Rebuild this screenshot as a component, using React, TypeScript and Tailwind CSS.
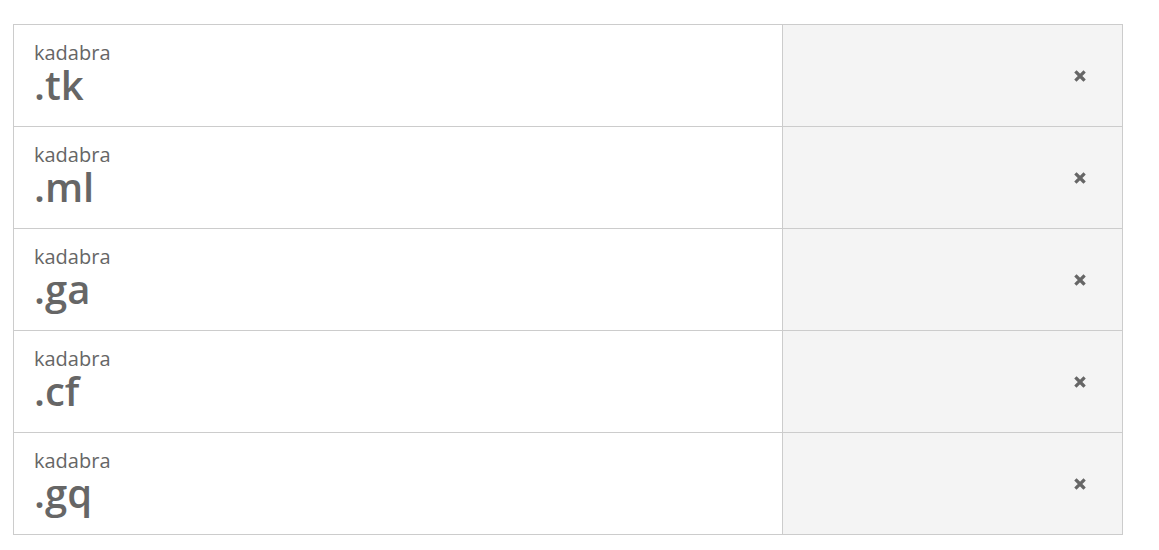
import React from 'react';

const domains = ['.tk', '.ml', '.ga', '.cf', '.gq'];

const CloseIcon = () => (
  <svg width="12" height="12" viewBox="0 0 12 12" className="block">
    <path d="M2.5 2.5 L9.5 9.5 M9.5 2.5 L2.5 9.5" stroke="#666" strokeWidth="3.2" strokeLinecap="square" />
  </svg>
);

export default function App() {
  return (
    <div className="min-h-[550px] bg-white" style={{ fontFamily: '"Open Sans", "Liberation Sans", sans-serif' }}>
      <div className="pt-[24px] pl-[13px]">
        <div className="w-[1110px] border border-[#cccccc]">
          {domains.map((tld, i) => (
            <div
              key={tld}
              className={`flex ${i < domains.length - 1 ? 'h-[102px] border-b border-[#cccccc]' : 'h-[101px]'}`}
            >
              <div className="w-[769px] border-r border-[#cccccc] pl-[20px] pt-[18px] text-[#666666]">
                <div className="text-[20px] leading-[20px]">kadabra</div>
                <div className="text-[40px] leading-[43px] font-semibold">{tld}</div>
              </div>
              <div className="flex-1 bg-[#f4f4f4] flex items-center justify-end pr-[36px]">
                <button className="p-0">
                  <CloseIcon />
                </button>
              </div>
            </div>
          ))}
        </div>
      </div>
    </div>
  );
}
